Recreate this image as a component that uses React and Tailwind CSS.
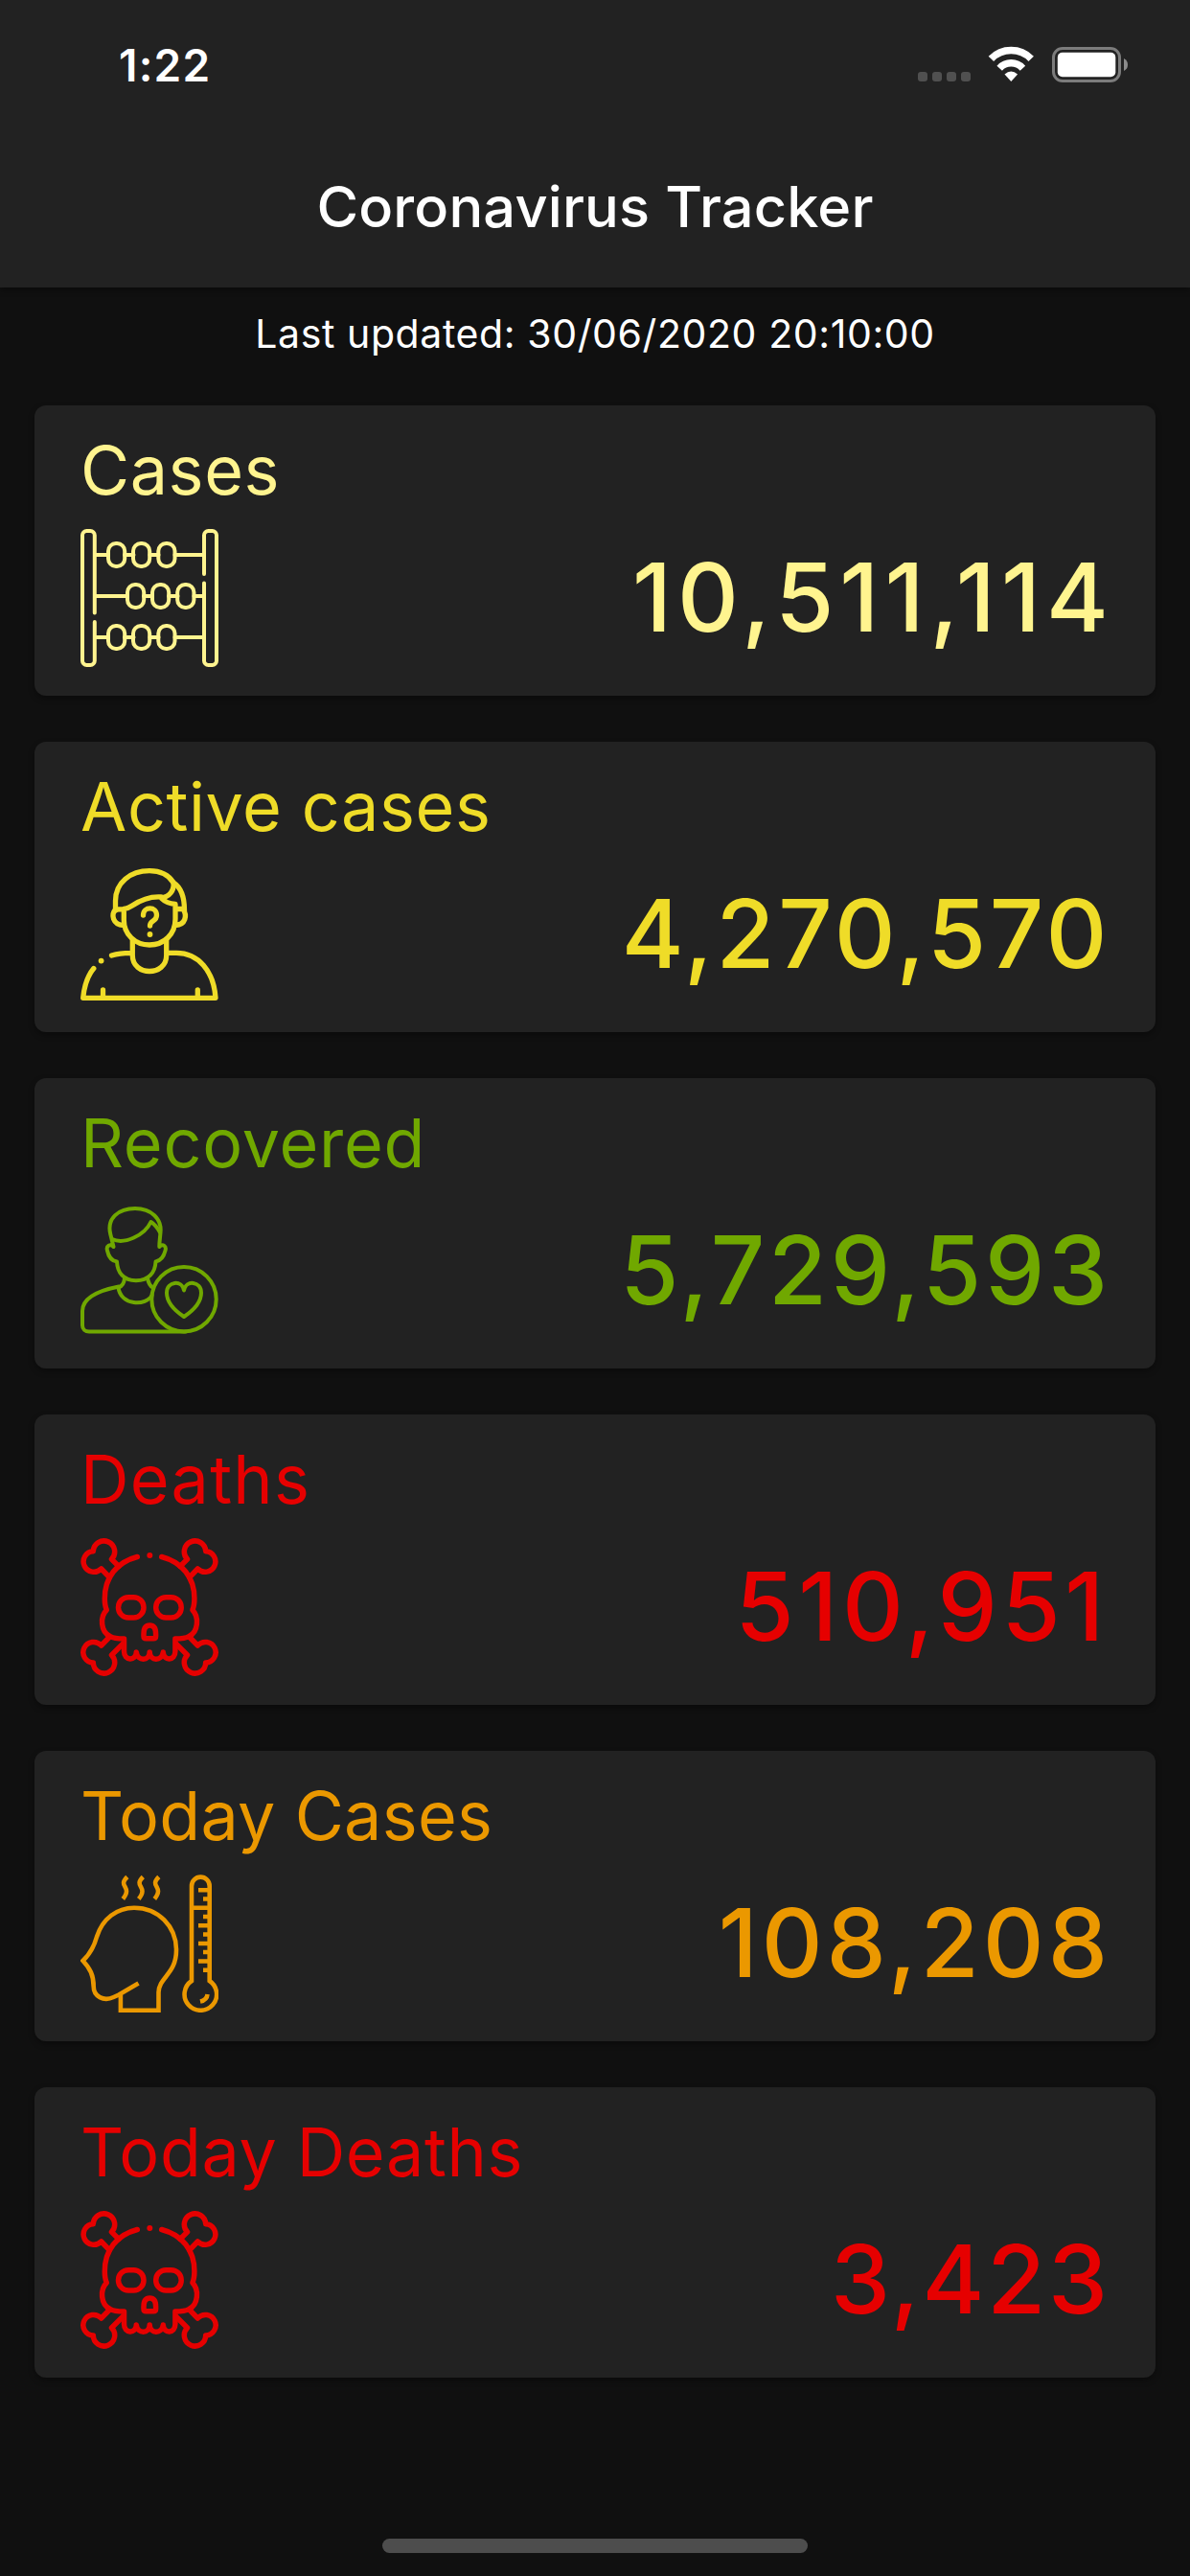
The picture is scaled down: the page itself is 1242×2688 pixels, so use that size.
const BEADS = [
  [53, 37], [79, 37], [105.3, 37],
  [73, 80], [99, 80], [125.2, 80],
  [53, 123], [79, 123], [105.3, 123],
];

function Icon({ viewBox, strokeWidth, sharp = false, children }) {
  return (
    <svg
      className="size-36"
      viewBox={viewBox}
      fill="none"
      stroke="currentColor"
      strokeWidth={strokeWidth}
      strokeLinecap={sharp ? "butt" : "round"}
      strokeLinejoin={sharp ? "miter" : "round"}
    >
      {children}
    </svg>
  );
}

function AbacusIcon() {
  return (
    <Icon viewBox="24 22 144 144" strokeWidth="4">
      <path d="M38.8 109.500V28.500a4.500 4.500 0 0 0-4.500-4.500H30.500a4.500 4.500 0 0 0-4.500 4.500V159.500a4.500 4.500 0 0 0 4.500 4.500h3.800a4.500 4.500 0 0 0 4.500-4.500V119" />
      <path d="M153 69V28.500a4.500 4.500 0 0 1 4.500-4.500h4a4.500 4.500 0 0 1 4.500 4.500V159.500a4.500 4.500 0 0 1-4.500 4.500h-4a4.500 4.500 0 0 1-4.500-4.500V78.500" />
      <path d="M39 49H53M70 49H79.500M96.500 49H105.500M122.500 49H153M39 92H73M90 92H99M116 92H125.500M142.500 92H153M39 135H53M70 135H79.500M96.500 135H105.500M122.500 135H153" />
      {BEADS.map(([x, y]) => (
        <rect key={`${x}-${y}`} x={x} y={y} width="17.200" height="24" rx="8" />
      ))}
    </Icon>
  );
}

function UnknownPersonIcon() {
  return (
    <Icon viewBox="24 18 144 144" strokeWidth="5.300">
      <path d="M60.500 65V55C60.500 36 76 23.700 96 23.700C107 23.700 116 28 121 36C129 41 132.500 52 132.500 65" />
      <path d="M121 36C122 44 117 51 108 52C113 57 117 58 123 58.500V74C123 90 111 101 96 101C81 101 69.300 90 69.300 75V63.500M108 51C94 50 84 56 78 60C72 64 67 64 60.500 64C56 69 57 80 69 80.500M123 63.500H131C135.500 70 134 80 123 80.500" />
      <path d="M89.500 70C89.500 60.500 103.500 60.500 103.500 70C103.500 77 96.500 75 96.500 81" />
      <path d="M78.300 96V112C78.300 134 113.700 134 113.700 112V96M56.500 112Q65 109.300 76 109.300M115 109.300H124C147 109.300 163 128 165 156.300H26.700C28 143 31.500 133 37.800 125.500M47.500 156V148M146.300 156V148" />
      <circle cx="96.500" cy="90" r="2.900" fill="currentColor" stroke="none" />
      <circle cx="45.600" cy="117.600" r="2.900" fill="currentColor" stroke="none" />
    </Icon>
  );
}

function RecoveredIcon() {
  return (
    <Icon viewBox="24 14 144 144" strokeWidth="4">
      <path d="M58.500 61L55.300 48C51 31 64 21 81 21C98 21 109 32 107.500 46C107 52 106.300 56 106.300 61C110 57.500 114 60 112.500 65C111 71 108 75.500 102.500 76.500C102 88 95 96.300 82 96.300C69 96.300 62.500 88 62 76.500C56 75.500 53 70 52 65C50.500 60 55 57.500 58.500 61Z" />
      <path d="M57 53C70 59 91 49 97.500 35Q103 38.500 107 46M70 94C69.500 99 67.500 102 64 103.300M94 94C95 99 96.500 102 99.500 103.500M64 102.500C36 108 26 117 26 128V143C26 147 29 149.500 33 149.500H134M63.500 103C65.500 123 93 123 98.500 111.500" />
      <circle cx="132" cy="115.700" r="33.700" />
      <path d="M132 106.500C130 95 114 97 114 109C114 120 123 128 132 134C141 128 150 120 150 109C150 97 134 95 132 106.500Z" />
    </Icon>
  );
}

function SkullIcon() {
  return (
    <Icon viewBox="24 20 144 144" strokeWidth="5.500">
      <path d="M83.300 39.500C62 45 49.300 61 49.300 83C49.300 88 49.500 91 51.300 95C44 102 45 118 55 122.500C59 125 65 125 69.500 125V138C69.500 148.500 82 148.500 82.300 139C83.500 148.500 96 148.500 96.200 139C96.500 148.500 109 148.500 110.300 139C110.500 148.500 122.900 148.500 122.900 138V125C127 125 133 125 137.200 122.500C147 118 148 102 140.900 95C142.700 91 142.900 88 142.900 83C142.900 61 130 45 108.700 39.500" />
      <rect x="63.500" y="81.700" width="26.500" height="21.300" rx="10.500" />
      <rect x="102.700" y="81.700" width="26.500" height="21.300" rx="10.500" />
      <path d="M96.300 111C91.500 111 90 115 90 120V122.500Q90 124.700 92.500 124.700H100Q102.600 124.700 102.600 122.500V120C102.600 115 101 111 96.300 111Z" />
      {["translate(0 0)", "translate(192 0) scale(-1 1)"].map((side) => (
        <g key={side} transform={side}>
          <path d="M54.300 61L45.700 52A10.800 10.800 0 1 1 37.300 33.700A11.200 11.200 0 1 1 56.500 42L64 49.500" />
          <path d="M54.500 123L45.700 132A10.800 10.800 0 1 0 37.300 150A11.200 11.200 0 1 0 56.500 142L68 130.500" />
        </g>
      ))}
      <circle cx="96.300" cy="38" r="3" fill="currentColor" stroke="none" />
    </Icon>
  );
}

function FeverIcon() {
  return (
    <Icon viewBox="24 21 144 144" strokeWidth="4.600" sharp>
      <path d="M84.500 134.500L64 146.500L58.500 149C48 154 37.700 148 37.700 138C37.700 126 34 119 26.500 111C35 103 38.500 95 41 86C47 67 62 55.700 80 55.700C105 55.700 124 75 124 100C124 125 106 128 105.500 144V162.700H65.900V145.500" />
      <path d="M72.800 23.500C62 34 79 33 68.300 46.500M89.300 23.500C78.500 34 95.500 33 84.800 46.500M105.800 23.500C95 34 112 33 101.300 46.500" />
      <path d="M140 132V33a9.300 9.300 0 0 1 18.700 0V132A16.800 16.800 0 1 1 140 132Z" />
      <path d="M140 55.700H157M147 37.300H157M152 46.500H157M152 65H157M147 74.300H157M152 83.500H157M147 93H157M152 102H157M147 111.500H157M152 120.800H157M156.500 146Q156 152 149 153.500" />
    </Icon>
  );
}

const cards = [
  { label: "Cases", value: "10,511,114", Icon: AbacusIcon, color: "text-[#fff48f]", labelClass: "tracking-[0.58px]", valueClass: "tracking-[6px] -mr-[5px]" },
  { label: "Active cases", value: "4,270,570", Icon: UnknownPersonIcon, color: "text-[#efdc28]", labelClass: "tracking-[0.6px]", valueClass: "tracking-[3.6px] -mr-px" },
  { label: "Recovered", value: "5,729,593", Icon: RecoveredIcon, color: "text-[#70a800]", labelClass: "tracking-[0.8px]", valueClass: "tracking-[3.8px] -mr-0.5" },
  { label: "Deaths", value: "510,951", Icon: SkullIcon, color: "text-[#e60000]", labelClass: "tracking-[1.28px]", valueClass: "tracking-[4.6px] mr-px" },
  { label: "Today Cases", value: "108,208", Icon: FeverIcon, color: "text-[#eb9800]", labelClass: "tracking-[0.3px]", valueClass: "tracking-[4px] -mr-0.5" },
  { label: "Today Deaths", value: "3,423", Icon: SkullIcon, color: "text-[#e60000]", labelClass: "tracking-[0.64px]", valueClass: "tracking-[2.8px] -mr-px" },
];

function StatusIcons() {
  return (
    <svg className="h-10 w-[222px]" viewBox="957 48 222 40" fill="none">
      {[958, 973, 988, 1003].map((x) => (
        <rect key={x} x={x} y="75" width="10" height="10" rx="3" fill="#505050" />
      ))}
      <path d="M1034.400 61.300A29.200 29.200 0 0 1 1076.200 61.300" stroke="#fff" strokeWidth="7.600" />
      <path d="M1043.200 71.200A16.300 16.300 0 0 1 1067.400 71.200" stroke="#fff" strokeWidth="7.400" />
      <path d="M1055.300 85L1048.500 77.600Q1055.300 71.200 1062.100 77.600Z" fill="#fff" />
      <rect x="1099.500" y="50.500" width="69" height="34" rx="9.500" stroke="#7c7c7c" strokeWidth="3" />
      <rect x="1103.800" y="54.800" width="60.500" height="25.500" rx="5" fill="#fff" />
      <path d="M1173 61Q1177 63 1177 67.500T1173 74Z" fill="#8c8c8c" />
    </svg>
  );
}

function StatCard({ label, value, Icon: CardIcon, color, labelClass, valueClass }) {
  return (
    <section className={`h-[303px] rounded-xl bg-[#222] px-12 shadow-[0_3px_6px_rgba(0,0,0,0.35)] ${color}`}>
      <h2 className={`h-[129px] text-[70px] leading-[136px] ${labelClass}`}>{label}</h2>
      <div className="flex items-center justify-between">
        <CardIcon />
        <span className={`pb-0.5 text-[99px] leading-[120px] font-medium ${valueClass}`}>{value}</span>
      </div>
    </section>
  );
}

export default function App() {
  return (
    <div className="flex h-[2688px] w-[1242px] flex-col bg-[#101010] font-['Inter',sans-serif] text-white">
      <header className="h-[300px] shrink-0 bg-[#222] shadow-[0_3px_6px_rgba(0,0,0,0.35)]">
        <div className="flex h-[132px] items-center justify-between pt-1 pr-[63px] pl-[124px]">
          <span className="text-[46px] font-semibold tracking-[1.2px]">1:22</span>
          <StatusIcons />
        </div>
        <h1 className="text-center text-[59.5px] leading-[167px] font-medium tracking-[0.16px]">Coronavirus Tracker</h1>
      </header>
      <p className="h-[123px] shrink-0 text-center text-[41px] leading-[97px] tracking-[0.6px]">
        Last updated: 30/06/2020 20:10:00
      </p>
      <main className="flex flex-col gap-12 px-9">
        {cards.map((card) => (
          <StatCard key={card.label} {...card} />
        ))}
      </main>
      <div className="mx-auto mt-auto mb-6 h-[15px] w-[444px] rounded-full bg-[#4d4d4d]" />
    </div>
  );
}
